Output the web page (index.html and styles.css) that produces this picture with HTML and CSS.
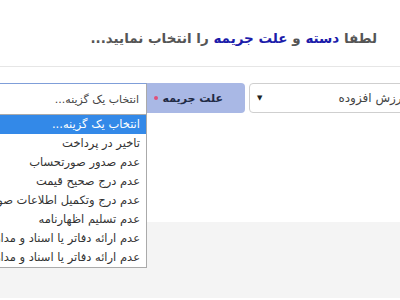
FILE: index.html
```html
<!DOCTYPE html>
<html lang="fa" dir="rtl">
<head>
    <meta charset="UTF-8">
    <meta name="viewport" content="width=device-width, initial-scale=1.0">
    <title>انتخاب جریمه</title>
    <link rel="stylesheet" href="styles.css">
</head>
<body>
    <div class="panel">
        <h2 class="title">لطفا <span class="hl">دسته</span> و <span class="hl">علت جریمه</span> را انتخاب نمایید...</h2>
        <div class="form-row">
            <div class="select">
                <span class="select-text">ارزش افزوده</span>
                <span class="arrow">▼</span>
            </div>
            <label class="addon">علت جریمه <span class="req"></span></label>
            <div class="combo">
                <div class="combo-input">انتخاب یک گزینه...</div>
                <ul class="options">
                    <li class="active">انتخاب یک گزینه...</li>
                    <li>تاخیر در پرداخت</li>
                    <li>عدم صدور صورتحساب</li>
                    <li>عدم درج صحیح قیمت</li>
                    <li>عدم درج وتکمیل اطلاعات صورتحساب</li>
                    <li>عدم تسلیم اظهارنامه</li>
                    <li>عدم ارائه دفاتر یا اسناد و مدارک</li>
                    <li>عدم ارائه دفاتر یا اسناد و مدارک</li>
                </ul>
            </div>
        </div>
    </div>
    <div class="footer"></div>
</body>
</html>
```

FILE: styles.css
```css
body {
    margin: 0;
    font-family: "DejaVu Sans", sans-serif;
    background-color: white;
    overflow: hidden;
}
.panel {
    height: 222px;
    background-color: white;
}
.title {
    margin: 0;
    padding: 30px 23px 0 0;
    height: 36px;
    font-size: 13.5px;
    font-weight: bold;
    color: #555;
    border-bottom: 1px solid #e6e6e6;
    white-space: nowrap;
}
.hl {
    color: #1c1caa;
}
.form-row {
    display: flex;
    margin-top: 16px;
    margin-right: -20px;
    height: 30px;
}
.select {
    flex-shrink: 0;
    display: flex;
    align-items: center;
    justify-content: space-between;
    width: 171px;
    padding: 0 14px 0 7px;
    border: 1px solid #cfcfcf;
    border-radius: 4px;
    box-sizing: border-box;
    font-size: 12px;
    color: #444;
    white-space: nowrap;
}
.arrow {
    font-size: 7px;
    color: #222;
}
.addon {
    flex-shrink: 0;
    display: flex;
    align-items: center;
    gap: 5px;
    width: 98px;
    margin-right: 4px;
    padding-right: 22px;
    box-sizing: border-box;
    background-color: #a9b8e5;
    border-top-right-radius: 4px;
    border-bottom-right-radius: 4px;
    font-size: 11px;
    font-weight: bold;
    color: #1f2a44;
    white-space: nowrap;
}
.req {
    flex-shrink: 0;
    width: 4px;
    height: 4px;
    border-radius: 50%;
    background-color: #e0507a;
}
.combo {
    flex-shrink: 0;
    position: relative;
    width: 180px;
}
.combo-input {
    height: 31px;
    padding-right: 7px;
    line-height: 31px;
    border: 1px solid #aaa;
    border-top-color: #7f9ed9;
    border-bottom: none;
    box-sizing: border-box;
    font-size: 11px;
    color: #444;
}
.options {
    position: absolute;
    top: 31px;
    right: 0;
    width: 100%;
    margin: 0;
    padding: 0;
    list-style: none;
    background-color: white;
    border: 1px solid #aaa;
    box-sizing: border-box;
    z-index: 2;
}
.options li {
    height: 19px;
    line-height: 19px;
    padding-right: 6px;
    font-size: 11.5px;
    color: #333;
    white-space: nowrap;
}
.options li.active {
    background-color: #3389e8;
    color: white;
}
.footer {
    height: 76px;
    background-color: #f4f4f4;
}
```
